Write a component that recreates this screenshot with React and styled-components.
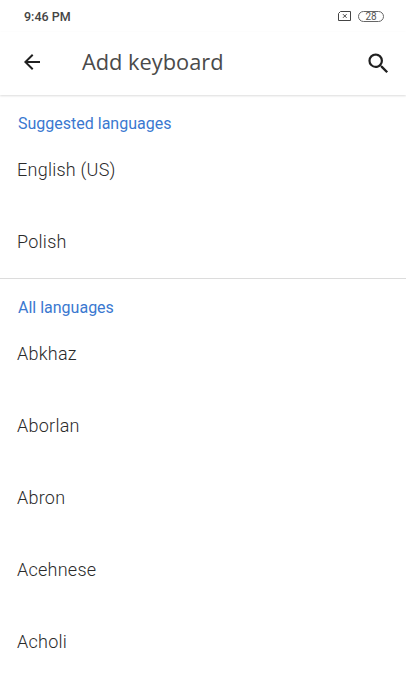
import styled, { createGlobalStyle } from 'styled-components'

const SUGGESTED = ['English (US)', 'Polish']
const ALL = ['Abkhaz', 'Aborlan', 'Abron', 'Acehnese', 'Acholi']

export default function App() {
  return (
    <Screen>
      <GlobalStyle />
      <StatusBar>
        <Time>9:46 PM</Time>
        <StatusIcons>
          <svg width="15" height="12" viewBox="0 0 15 12" fill="none" stroke="#444" strokeWidth="1">
            <path d="M3.5 1.5h10v9h-12v-7z" />
            <path d="M6 4.2l3.6 3.6M9.6 4.2L6 7.8" />
          </svg>
          <Battery>28</Battery>
        </StatusIcons>
      </StatusBar>
      <Toolbar>
        <BackButton>
          <svg width="24" height="24" viewBox="0 0 24 24" fill="#202020">
            <path d="M20 11H7.83l5.59-5.59L12 4l-8 8 8 8 1.41-1.41L7.83 13H20v-2z" />
          </svg>
        </BackButton>
        <Title>Add keyboard</Title>
        <SearchButton>
          <svg width="27" height="27" viewBox="0 0 24 24" fill="#202020">
            <path d="M15.5 14h-.79l-.28-.27A6.47 6.47 0 0 0 16 9.5 6.5 6.5 0 1 0 9.5 16c1.61 0 3.09-.59 4.23-1.57l.27.28v.79l5 4.99L20.49 19l-4.99-5zm-6 0C7.01 14 5 11.99 5 9.5S7.01 5 9.5 5 14 7.01 14 9.5 11.99 14 9.5 14z" />
          </svg>
        </SearchButton>
      </Toolbar>
      <Section>
        <SectionTitle>Suggested languages</SectionTitle>
        {SUGGESTED.map(name => (
          <Row key={name}>{name}</Row>
        ))}
      </Section>
      <Section $divided>
        <SectionTitle>All languages</SectionTitle>
        {ALL.map(name => (
          <Row key={name}>{name}</Row>
        ))}
      </Section>
    </Screen>
  )
}

const GlobalStyle = createGlobalStyle`
  html, body {
    margin: 0;
    padding: 0;
    background: #fff;
  }
`

const Screen = styled.div`
  width: 406px;
  height: 688px;
  overflow: hidden;
  background: #fff;
  font-family: Roboto, 'Liberation Sans', sans-serif;
`

const StatusBar = styled.div`
  height: 32px;
  padding: 0 22px 0 24px;
  display: flex;
  align-items: center;
  justify-content: space-between;
`

const Time = styled.span`
  font-size: 12.5px;
  font-weight: 500;
  color: #444;
`

const StatusIcons = styled.div`
  display: flex;
  align-items: center;
  gap: 6px;
`

const Battery = styled.span`
  width: 26px;
  height: 11px;
  box-sizing: border-box;
  border: 1px solid #666;
  border-radius: 6px;
  font-size: 10px;
  line-height: 9px;
  text-align: center;
  color: #555;
`

const Toolbar = styled.div`
  height: 63px;
  padding: 0 14px 4px 20px;
  box-sizing: border-box;
  display: flex;
  align-items: center;
  box-shadow: 0 1px 2px rgba(0, 0, 0, 0.14);
`

const BackButton = styled.div`
  width: 24px;
  height: 24px;
  margin-right: 38px;
`

const SearchButton = styled.div`
  width: 27px;
  height: 27px;
  margin: 4px 0 0 auto;
`

const Title = styled.h1`
  margin: 0;
  font-family: 'Open Sans', Roboto, sans-serif;
  font-size: 21.8px;
  font-weight: 400;
  color: #4a4a4a;
`

const Section = styled.div`
  border-top: ${props => (props.$divided ? '1px solid #dcdcdc' : 'none')};
`

const SectionTitle = styled.div`
  height: 39px;
  padding: 18px 18px 0;
  box-sizing: border-box;
  display: flex;
  align-items: center;
  font-size: 16px;
  font-weight: 400;
  color: #3a78d0;
`

const Row = styled.div`
  height: 72px;
  padding: 0 17px 1px;
  box-sizing: border-box;
  display: flex;
  align-items: center;
  font-size: 18px;
  font-weight: 300;
  letter-spacing: 0.25px;
  color: #2a2a2a;
`
